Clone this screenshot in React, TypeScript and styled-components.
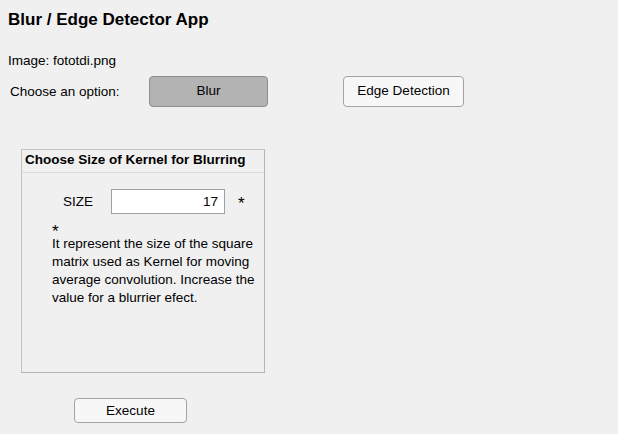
import styled, { createGlobalStyle } from 'styled-components'

const Global = createGlobalStyle`
  html, body {
    margin: 0;
    padding: 0;
    background: #f0f0f0;
  }
  body {
    font-family: "Liberation Sans", Arial, sans-serif;
    font-size: 13.5px;
    color: #000;
  }
`

const Page = styled.div`
  width: 618px;
  height: 434px;
  box-sizing: border-box;
  padding: 10px 8px 0;
  background: #f0f0f0;
  overflow: hidden;
`

const Title = styled.h1`
  margin: 0;
  font-size: 17px;
  line-height: 19px;
  font-weight: bold;
`

const FileLine = styled.div`
  margin-top: 24px;
  line-height: 15px;
`

const OptionRow = styled.div`
  margin-top: 8px;
  display: flex;
  align-items: center;
  height: 30px;
`

const OptionLabel = styled.span`
  width: 141px;
  padding-left: 2px;
  box-sizing: border-box;
`

const Button = styled.button<{ $pressed?: boolean; $w: number; $h: number }>`
  width: ${(p) => p.$w}px;
  height: ${(p) => p.$h}px;
  box-sizing: border-box;
  padding: 0 0 1px;
  border-radius: 4px;
  border: 1px solid ${(p) => (p.$pressed ? '#8e8e8e' : '#a3a3a3')};
  background: ${(p) => (p.$pressed ? '#b3b3b3' : '#f7f7f7')};
  font-family: inherit;
  font-size: 13.5px;
  color: #000;
  cursor: pointer;
`

const Spacer = styled.div<{ $w: number }>`
  width: ${(p) => p.$w}px;
`

const Panel = styled.section`
  margin: 43px 0 0 13px;
  width: 244px;
  height: 224px;
  box-sizing: border-box;
  border: 1px solid #c4c4c4;
  border-right-color: #b4b4b4;
  border-bottom-color: #b4b4b4;
`

const PanelHeader = styled.div`
  height: 23px;
  box-sizing: border-box;
  padding: 2px 0 0 3px;
  line-height: 16px;
  font-weight: bold;
  border-bottom: 1px solid #dcdcdc;
`

const SizeRow = styled.div`
  margin-top: 16px;
  padding-left: 41px;
  display: flex;
  align-items: center;
`

const SizeLabel = styled.label`
  width: 48px;
`

const NumberField = styled.input`
  width: 114px;
  height: 25px;
  box-sizing: border-box;
  border: 1px solid #a0a0a0;
  background: #fff;
  padding: 0 6px 0 0;
  text-align: right;
  font-family: inherit;
  font-size: 13.5px;
  color: #000;
  outline: none;
`

const Mark = styled.span`
  margin-left: 13px;
  font-size: 17px;
  line-height: 17px;
  padding-top: 4px;
`

const Note = styled.div`
  margin-top: 14px;
  padding-left: 30px;
`

const NoteMark = styled.div`
  height: 7px;
  line-height: 7px;
  font-size: 17px;
  overflow: visible;
`

const NoteText = styled.p`
  margin: 0;
  width: 208px;
  line-height: 18px;
`

const Footer = styled.div`
  margin: 25px 0 0 66px;
`

export default function App() {
  return (
    <Page>
      <Global />
      <Title>Blur / Edge Detector App</Title>
      <FileLine>Image: fototdi.png</FileLine>
      <OptionRow>
        <OptionLabel>Choose an option:</OptionLabel>
        <Button $pressed $w={119} $h={31}>Blur</Button>
        <Spacer $w={75} />
        <Button $w={121} $h={31}>Edge Detection</Button>
      </OptionRow>
      <Panel>
        <PanelHeader>Choose Size of Kernel for Blurring</PanelHeader>
        <SizeRow>
          <SizeLabel>SIZE</SizeLabel>
          <NumberField defaultValue="17" />
          <Mark>*</Mark>
        </SizeRow>
        <Note>
          <NoteMark>*</NoteMark>
          <NoteText>
            It represent the size of the square matrix used as Kernel for moving average
            convolution. Increase the value for a blurrier efect.
          </NoteText>
        </Note>
      </Panel>
      <Footer>
        <Button $w={113} $h={25}>Execute</Button>
      </Footer>
    </Page>
  )
}
